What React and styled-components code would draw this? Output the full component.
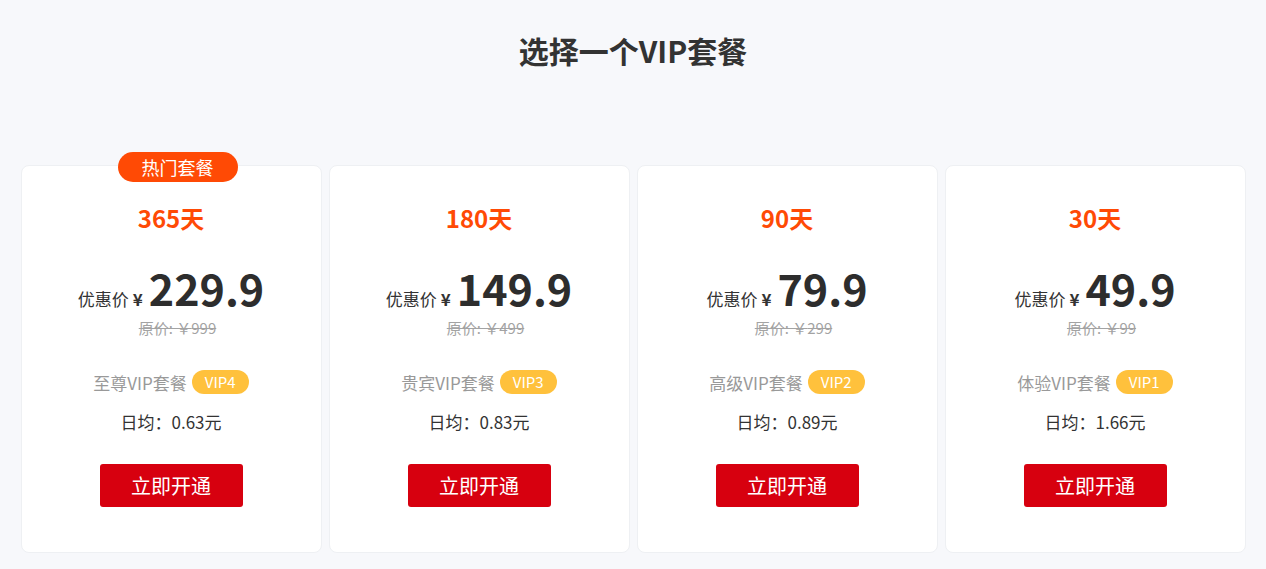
import React from 'react'
import styled, { createGlobalStyle } from 'styled-components'

const GlobalStyle = createGlobalStyle`
  body {
    margin: 0;
    background: #f7f8fb;
    font-family: "Noto Sans CJK SC", "Noto Sans", sans-serif;
    color: #333;
  }
`

const plans = [
  { days: '365天', price: '229.9', orig: '999', name: '至尊VIP套餐', level: 'VIP4', daily: '0.63', hot: true },
  { days: '180天', price: '149.9', orig: '499', name: '贵宾VIP套餐', level: 'VIP3', daily: '0.83' },
  { days: '90天', price: '79.9', orig: '299', name: '高级VIP套餐', level: 'VIP2', daily: '0.89' },
  { days: '30天', price: '49.9', orig: '99', name: '体验VIP套餐', level: 'VIP1', daily: '1.66' },
]

const Page = styled.div`
  width: 1225px;
  margin: 0 auto;
  padding-top: 30px;
`

const Title = styled.h1`
  margin: 0;
  height: 40px;
  line-height: 40px;
  text-align: center;
  font-size: 30px;
  font-weight: 700;
  color: #333;
`

const Cards = styled.div`
  display: grid;
  grid-template-columns: repeat(4, 301px);
  gap: 7px;
  margin-top: 95px;
`

const Card = styled.div`
  position: relative;
  background: #fff;
  border: 1px solid #eef0f3;
  border-radius: 8px;
  box-sizing: border-box;
  height: 388px;
  padding-top: 36px;
  display: flex;
  flex-direction: column;
  align-items: center;
`

const HotTag = styled.div`
  position: absolute;
  top: -14px;
  left: 96px;
  width: 120px;
  height: 30px;
  line-height: 30px;
  border-radius: 15px;
  background: #ff4a05;
  color: #fff;
  font-size: 18px;
  text-align: center;
`

const Days = styled.div`
  height: 32px;
  line-height: 32px;
  font-size: 24px;
  font-weight: 700;
  color: #ff4a05;
`

const PriceRow = styled.div`
  margin-top: 30px;
  height: 46px;
  display: flex;
  align-items: baseline;
  gap: 4px;
`

const PriceLabel = styled.span`
  font-size: 17px;
  line-height: 20px;
  color: #333;
`

const Yen = styled.span`
  font-size: 17px;
  line-height: 20px;
  font-weight: 700;
  margin-right: 2px;
`

const Amount = styled.span`
  font-size: 43px;
  font-weight: 700;
  line-height: 46px;
  color: #2d2d2d;
`

const Original = styled.div`
  margin-top: 9px;
  padding-left: 13px;
  line-height: 18px;
  font-size: 15px;
  color: #a3a3a3;
  text-decoration: line-through;
`

const LevelRow = styled.div`
  margin-top: 33px;
  height: 24px;
  display: flex;
  align-items: center;
  gap: 5px;
  font-size: 17px;
  color: #999;
`

const LevelTag = styled.span`
  height: 24px;
  line-height: 24px;
  padding: 0 13px;
  border-radius: 12px;
  background: #ffc13c;
  color: #fff;
  font-size: 15px;
`

const Daily = styled.div`
  margin-top: 16px;
  line-height: 24px;
  font-size: 17px;
  color: #333;
`

const Button = styled.button`
  margin-top: 30px;
  width: 143px;
  height: 43px;
  border: none;
  border-radius: 3px;
  background: #d7000f;
  color: #fff;
  font-family: inherit;
  font-size: 20px;
  cursor: pointer;
`

export default function App() {
  return (
    <Page>
      <GlobalStyle />
      <Title>选择一个VIP套餐</Title>
      <Cards>
        {plans.map((p) => (
          <Card key={p.level}>
            {p.hot && <HotTag>热门套餐</HotTag>}
            <Days>{p.days}</Days>
            <PriceRow>
              <PriceLabel>优惠价</PriceLabel>
              <Yen>¥</Yen>
              <Amount>{p.price}</Amount>
            </PriceRow>
            <Original>原价: ￥{p.orig}</Original>
            <LevelRow>
              {p.name}
              <LevelTag>{p.level}</LevelTag>
            </LevelRow>
            <Daily>日均：{p.daily}元</Daily>
            <Button>立即开通</Button>
          </Card>
        ))}
      </Cards>
    </Page>
  )
}
